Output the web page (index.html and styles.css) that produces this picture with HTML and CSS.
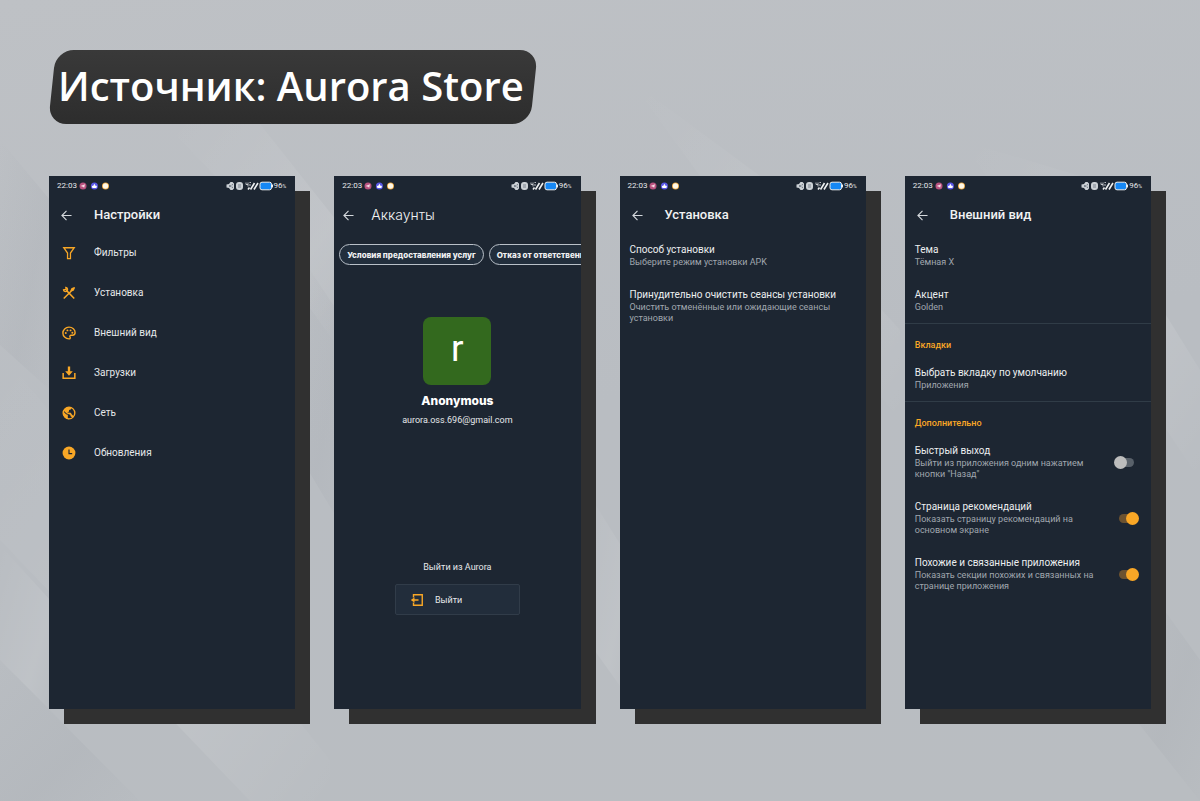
FILE: index.html
```html
<!DOCTYPE html>
<html lang="ru">
<head>
<meta charset="utf-8">
<meta name="viewport" content="width=device-width, initial-scale=1">
<title>Источник: Aurora Store</title>
<link rel="stylesheet" href="styles.css">
</head>
<body>
<svg class="backdrop" viewBox="0 0 1200 801" preserveAspectRatio="none" aria-hidden="true">
  <defs>
    <linearGradient id="streak" x1="0" y1="0" x2="1" y2="1"><stop offset="0" stop-color="#fff" stop-opacity="0"/><stop offset=".7" stop-color="#fff" stop-opacity=".09"/><stop offset="1" stop-color="#fff" stop-opacity="0"/></linearGradient>
    <linearGradient id="shade" x1="0" y1="0" x2="1" y2="1"><stop offset="0" stop-color="#8b9099" stop-opacity="0"/><stop offset=".6" stop-color="#8b9099" stop-opacity=".1"/><stop offset="1" stop-color="#8b9099" stop-opacity=".02"/></linearGradient>
  </defs>
  <path fill="url(#streak)" d="M165 124H260L340 225V350L215 176Z"/>
  <path fill="url(#shade)" d="M0 140L50 200V390L0 345Z"/>
  <path fill="url(#streak)" d="M0 350L330 760V801H250L0 540Z"/>
  <path fill="url(#shade)" d="M290 240L350 330V540L290 440Z"/>
  <path fill="url(#streak)" d="M0 545L50 600V710L0 660Z"/>
  <path fill="url(#shade)" d="M0 660L140 801H0Z"/>
  <path fill="url(#streak)" d="M630 80L760 176 900 330V420L700 176Z"/>
  <path fill="url(#streak)" d="M960 140L1080 176 1200 370V480L1100 330Z"/>
  <path fill="url(#shade)" d="M1150 590L1200 660V801L1120 700Z"/>
  <path fill="url(#streak)" d="M580 480L630 560V700L580 630Z"/>
</svg>
<svg class="sprite" aria-hidden="true">
  <symbol id="back" viewBox="0 0 12 12"><path d="M11.500 6H1M6 1L1 6l5 5" fill="none" stroke="currentColor" stroke-width="1.2"/></symbol>
  <symbol id="notices" viewBox="0 0 30 8">
    <circle cx="4" cy="4" r="3.500" fill="#b8527f"/><path d="M1.500 4L6 2.200 5.200 5.800 3.800 4.800z" fill="#f6dce6"/>
    <circle cx="15.400" cy="4" r="3.500" fill="#5a58e8"/><path d="M12.800 3.800l1.300.2 1.300-2.300L16.700 4l1.300-.2-.6 2.200h-4z" fill="#fff"/>
    <circle cx="26.500" cy="4" r="3.500" fill="#eda63c"/><circle cx="26.500" cy="4" r="2.700" fill="#fff8e8"/>
  </symbol>
  <symbol id="signals" viewBox="0 0 48 10">
    <path d="M.5 3.500L3 3l1.500-2h2l1.500 1.500v5L6.500 9h-2L3 7l-2.500-.5z" fill="#ccd1d6"/><path d="M3 4.200l2.500 1.700M3 5.900l2.500-1.700M6.500 3v1.200m0 1.600V7" stroke="#56606b" stroke-width=".7"/>
    <rect x="10" y="1" width="7" height="8" rx="3" fill="#ccd1d6"/><path d="M12 3h3v4h-3z" fill="#a3aab2"/>
    <path d="M20 1.500v2h2m0-2v4M23.500 1.500H25M23 4h2" fill="none" stroke="#dfe2e5" stroke-width=".8"/>
    <path d="M22 8.500l1.500-2M24.500 8.500L28.500 2M28 8.500L32 2" stroke="#eef0f1" stroke-width="1.600"/>
    <rect x="34" y="1.200" width="11.500" height="7.600" rx="2" fill="#1688f5" stroke="#eef0f1" stroke-width="1"/><path d="M46.500 3.500v3" stroke="#eef0f1"/>
  </symbol>
</svg>

<header class="heading"><h1 class="badge">Источник: Aurora Store</h1></header>

<main class="phones">
  <section class="phone" aria-label="Настройки">
    <div class="status"><span>22:03</span><svg class="notices"><use href="#notices"/></svg><svg class="signals"><use href="#signals"/></svg><span>96<small>%</small></span></div>
    <div class="toolbar"><button class="back" aria-label="Назад"><svg><use href="#back"/></svg></button><h2>Настройки</h2></div>
    <nav class="menu">
      <a href="#filters"><svg viewBox="0 0 24 24"><path fill="none" stroke="currentColor" stroke-width="2.200" d="M3 3h18l-6.500 9v9.500h-5V12z"/></svg>Фильтры</a>
      <a href="#install"><svg viewBox="0 0 24 24"><path fill="none" stroke="currentColor" stroke-width="2.600" d="M7.500 7.500L21 21.500M3 21.500L16 8.500"/><path fill="none" stroke="currentColor" stroke-width="2.200" d="M2.500 6.500c0 3 4 4 6 2s1-6-2-6L7 6z"/><path fill="currentColor" d="M14 9l2-5 5-2.500 1.500 1.500L20 8l-5 2z"/></svg>Установка</a>
      <a href="#look"><svg viewBox="0 0 24 24"><path fill="none" stroke="currentColor" stroke-width="2.400" d="M12 2C6 2 1.500 6.500 1.500 12S6 22 12 22c1.800 0 2.800-1.600 1.800-3-1-1.600 0-3.200 1.800-3.200H18c2.600 0 4.500-2 4.500-4.600C22.500 6 18 2 12 2z"/><g fill="currentColor"><circle cx="6.500" cy="12" r="1.700"/><circle cx="9.300" cy="7.500" r="1.700"/><circle cx="14.700" cy="7.500" r="1.700"/><circle cx="17.800" cy="11.500" r="1.700"/></g></svg>Внешний вид</a>
      <a href="#downloads"><svg viewBox="0 0 24 24"><path fill="none" stroke="currentColor" stroke-width="2.600" d="M2 12v9h20v-9"/><path fill="currentColor" d="M10 1h4v8h4.500L12 16.500 5.500 9H10z"/></svg>Загрузки</a>
      <a href="#network"><svg viewBox="0 0 24 24"><circle cx="12" cy="12" r="10" fill="none" stroke="currentColor" stroke-width="2.300"/><path fill="currentColor" d="M2 9l5 5 3 1v6l2 2C5 22 1 17 2 9zM6 4l6-2.500 4 1.500-1 3-3 1v2.500L9 11l6 .5 2 3 3 3-1.500 2L15 18l-1-3-6-2-5-5z"/></svg>Сеть</a>
      <a href="#updates"><svg viewBox="0 0 24 24"><circle cx="12" cy="12" r="11" fill="currentColor"/><path fill="none" stroke="#1d2632" stroke-width="2" d="M12 6v7h5.500"/></svg>Обновления</a>
    </nav>
  </section>

  <section class="phone" aria-label="Аккаунты">
    <div class="status"><span>22:03</span><svg class="notices"><use href="#notices"/></svg><svg class="signals"><use href="#signals"/></svg><span>96<small>%</small></span></div>
    <div class="toolbar toolbar-light"><button class="back" aria-label="Назад"><svg><use href="#back"/></svg></button><h2>Аккаунты</h2></div>
    <div class="chips"><button>Условия предоставления услуг</button><button>Отказ от ответственности</button></div>
    <div class="profile"><div class="avatar">r</div><h3>Anonymous</h3><p>aurora.oss.696@gmail.com</p></div>
    <div class="logout"><p>Выйти из Aurora</p>
      <button><svg viewBox="0 0 24 24"><path fill="none" stroke="currentColor" stroke-width="2.800" d="M5 7V1.500h17.500v21H5V17M1.500 12H15"/><path fill="currentColor" d="M0 12l7-5.500v11z"/></svg>Выйти</button></div>
  </section>

  <section class="phone" aria-label="Установка">
    <div class="status"><span>22:03</span><svg class="notices"><use href="#notices"/></svg><svg class="signals"><use href="#signals"/></svg><span>96<small>%</small></span></div>
    <div class="toolbar"><button class="back" aria-label="Назад"><svg><use href="#back"/></svg></button><h2>Установка</h2></div>
    <div class="pref"><div><h3>Способ установки</h3><p>Выберите режим установки APK</p></div></div>
    <div class="pref"><div><h3>Принудительно очистить сеансы установки</h3><p>Очистить отменённые или ожидающие сеансы установки</p></div></div>
  </section>

  <section class="phone" aria-label="Внешний вид">
    <div class="status"><span>22:03</span><svg class="notices"><use href="#notices"/></svg><svg class="signals"><use href="#signals"/></svg><span>96<small>%</small></span></div>
    <div class="toolbar"><button class="back" aria-label="Назад"><svg><use href="#back"/></svg></button><h2>Внешний вид</h2></div>
    <div class="pref"><div><h3>Тема</h3><p>Тёмная X</p></div></div>
    <div class="pref"><div><h3>Акцент</h3><p>Golden</p></div></div>
    <h3 class="category">Вкладки</h3>
    <div class="pref"><div><h3>Выбрать вкладку по умолчанию</h3><p>Приложения</p></div></div>
    <h3 class="category">Дополнительно</h3>
    <label class="pref"><span><b>Быстрый выход</b><i>Выйти из приложения одним нажатием кнопки "Назад"</i></span><input type="checkbox" class="switch"></label>
    <label class="pref"><span><b>Страница рекомендаций</b><i>Показать страницу рекомендаций на основном экране</i></span><input type="checkbox" class="switch" checked></label>
    <label class="pref"><span><b>Похожие и связанные приложения</b><i>Показать секции похожих и связанных на странице приложения</i></span><input type="checkbox" class="switch" checked></label>
  </section>
</main>
</body>
</html>
```
FILE: styles.css
```css
* { box-sizing: border-box; }
body {
  margin: 0;
  min-height: 100vh;
  display: flex;
  flex-direction: column;
  gap: 52px;
  padding: 50px 49px 92px;
  background: linear-gradient(170deg, #bec1c5, #b9bdc2 50%, #b9bdc1);
  color: #e6e8ea;
  font: 10px/12px Roboto, sans-serif;
}
h1, h2, h3, p { margin: 0; font: inherit; }
button { margin: 0; padding: 0; border: 0; background: none; color: inherit; font: inherit; }
a { color: inherit; text-decoration: none; }
.backdrop { position: absolute; inset: 0; width: 100%; height: 100%; z-index: -1; }
.sprite { position: absolute; width: 0; height: 0; }

.heading { display: flex; }
.badge {
  position: relative;
  z-index: 0;
  padding: 6px 13px 8px 9px;
  color: #fff;
  font: 600 40px/60px "Open Sans", sans-serif;
}
.badge::before {
  content: "";
  position: absolute;
  inset: 0 3px;
  z-index: -1;
  border-radius: 18px;
  background: linear-gradient(#393939, #2d2d2d);
  transform: skewX(-6deg);
}

.phones { flex: 1; display: grid; grid-template-columns: repeat(4, minmax(0, 1fr)); gap: 39px; }
.phone {
  display: flex;
  flex-direction: column;
  overflow: hidden;
  background: #1d2632;
  box-shadow: 15px 15px 0 #303030;
}
.status { display: flex; align-items: center; height: 20px; padding: 0 9px 0 8px; font-size: 8px; }
.status small { font-size: 5px; }
.notices { width: 30px; height: 8px; margin-left: 2px; }
.signals { width: 48px; height: 10px; margin-left: auto; }

.toolbar { display: flex; align-items: center; gap: 22px; height: 37px; padding: 1px 0 0 12px; }
.toolbar h2 { font-size: 13px; line-height: 16px; font-weight: 500; color: #f1f2f3; }
.back { display: flex; color: #d5d9dd; }
.back svg { width: 11px; height: 11px; }
.toolbar-light { gap: 17px; padding-left: 9px; }
.toolbar-light h2 { font-family: Inter, sans-serif; font-size: 14px; font-weight: 300; }

.menu { display: flex; flex-direction: column; }
.menu a { display: flex; align-items: center; gap: 18px; height: 40px; padding-left: 13px; }
.menu svg { width: 14px; height: 14px; color: #f9a726; }

.chips { display: flex; gap: 5px; padding: 11px 0 0 5px; overflow: hidden; }
.chips button {
  flex: none;
  height: 21px;
  padding: 0 7px;
  border: 1px solid #b9c0c8;
  border-radius: 11px;
  background: #222e3c;
  color: #f1f2f3;
  font: 800 8px/12px Inter, sans-serif;
}
.profile { display: flex; flex-direction: column; align-items: center; padding-top: 52px; }
.avatar {
  width: 68px;
  height: 68px;
  border-radius: 8px;
  background: #33691e;
  color: #fff;
  font-size: 37px;
  line-height: 64px;
  text-align: center;
}
.profile h3 { margin: 8px 0 5px; font: 800 12px/16px Inter, sans-serif; color: #fff; }
.profile p, .logout p { font-size: 9px; }
.logout { display: flex; flex-direction: column; align-items: center; gap: 11px; padding-top: 135px; }
.logout button {
  display: flex;
  align-items: center;
  gap: 12px;
  width: 125px;
  height: 31px;
  padding-left: 15px;
  border: 1px solid #313c49;
  border-radius: 2px;
  background: #222d3b;
  font-size: 9px;
}
.logout svg { width: 12px; height: 12px; color: #f9a726; }

.pref { display: flex; align-items: center; justify-content: space-between; gap: 14px; padding: 10px 12px 10px 10px; }
.pref h3, .pref b { display: block; margin-bottom: 1px; font-weight: 400; line-height: 13px; color: #eceef0; }
.pref p, .pref i { display: block; font-style: normal; font-size: 9px; line-height: 11px; color: #a0a7af; }
.category { padding: 15px 10px 5px; border-top: 1px solid #303c47; font-size: 9px; font-weight: 500; color: #f9a726; }

.switch { appearance: none; flex: none; position: relative; width: 25px; height: 13px; margin: 0; }
.switch::before { content: ""; position: absolute; inset: 2px 5px; border-radius: 5px; background: #59616a; }
.switch::after { content: ""; position: absolute; top: 0; left: 0; width: 13px; height: 13px; border-radius: 50%; background: #bdbdbd; }
.switch:checked::before { background: #6c5230; }
.switch:checked::after { left: auto; right: 0; background: #f9a726; }
```
